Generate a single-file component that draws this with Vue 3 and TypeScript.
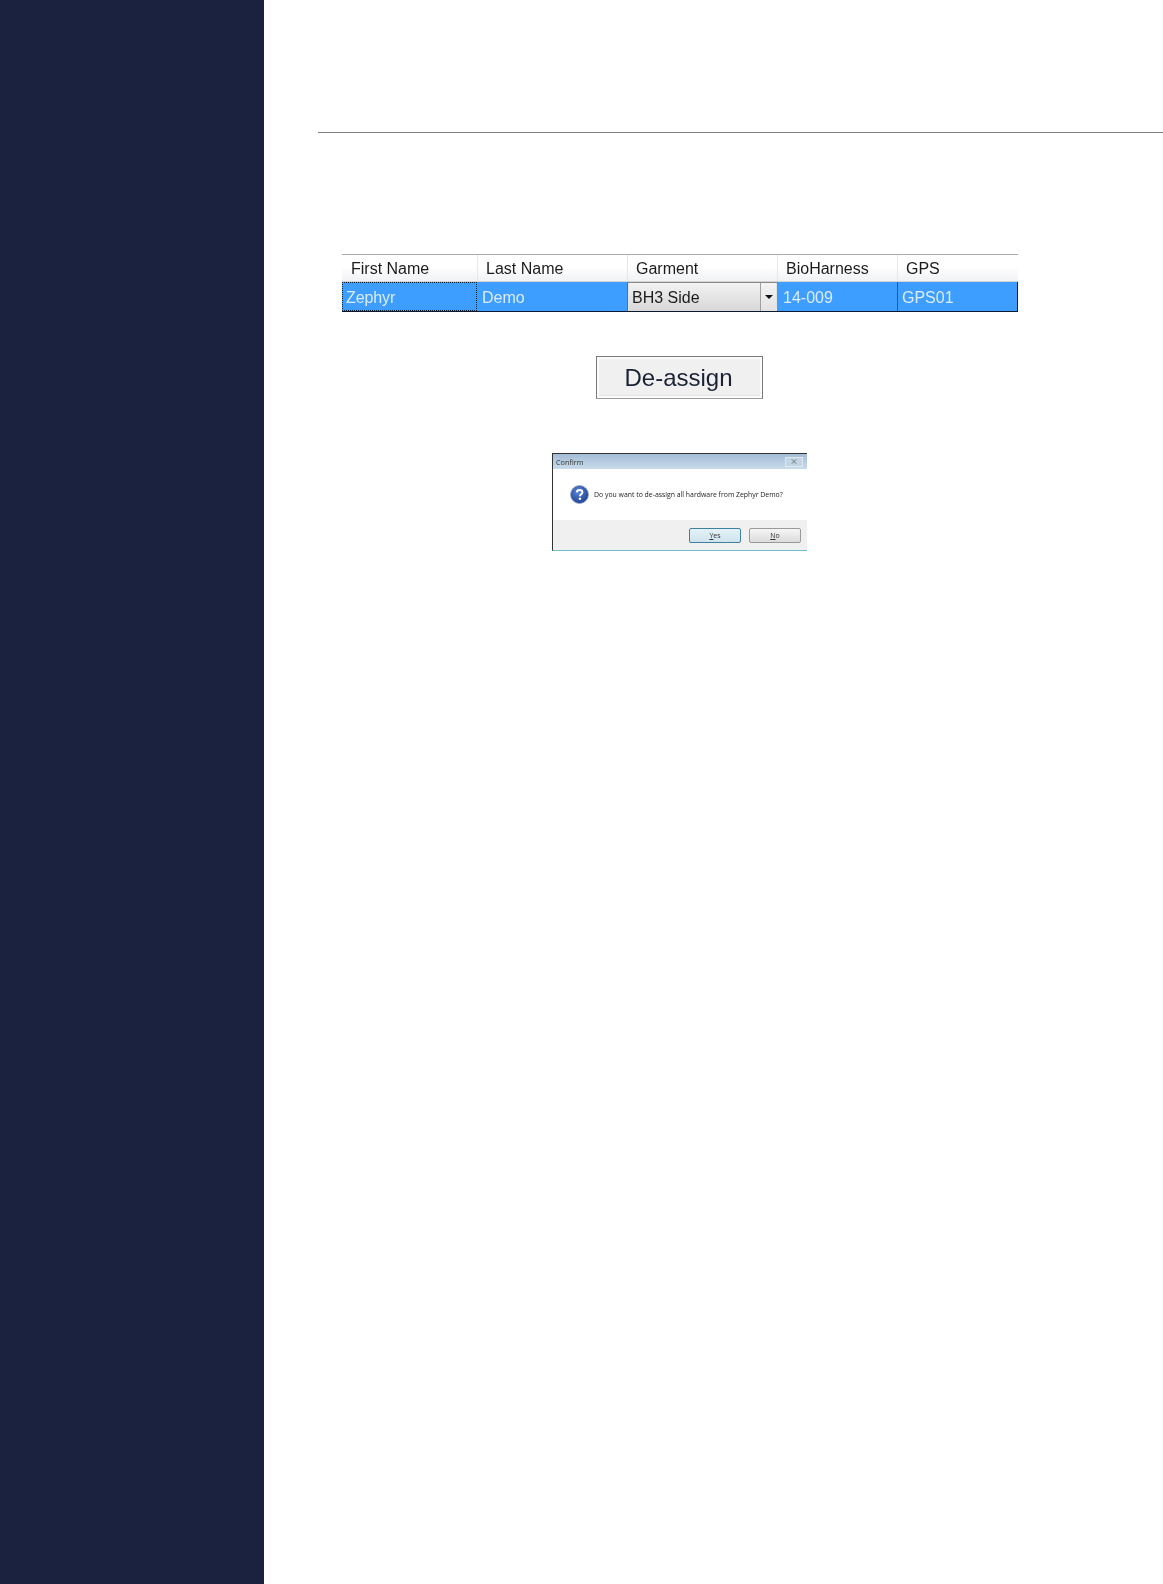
<script setup lang="ts">
const headers = [
  { label: 'First Name', w: 136 },
  { label: 'Last Name', w: 150 },
  { label: 'Garment', w: 150 },
  { label: 'BioHarness', w: 120 },
  { label: 'GPS', w: 120 },
]
</script>

<template>
  <div class="page">
    <aside class="sidebar"></aside>
    <main class="main">
      <div class="rule"></div>
      <section class="grid">
        <div class="head">
          <div v-for="h in headers" :key="h.label" class="hcell" :style="{ width: h.w + 'px' }">{{ h.label }}</div>
        </div>
        <div class="row">
          <div class="cell first">Zephyr</div>
          <div class="cell second">Demo</div>
          <div class="cell combo">
            <div class="combo-value">BH3 Side</div>
            <div class="combo-arrow"><span class="tri"></span></div>
          </div>
          <div class="cell fourth">14-009</div>
          <div class="cell fifth">GPS01</div>
        </div>
      </section>
      <div class="btn-wrap">
        <div class="deassign"><span>De-assign</span></div>
      </div>
      <div class="dlg-wrap">
        <div class="dialog">
          <div class="title">
            <span>Confirm</span>
            <div class="close">
              <svg width="8" height="7" viewBox="0 0 8 7"><path d="M1 0.5L7 6.5M7 0.5L1 6.5" stroke="#5f6f80" stroke-width="1.3" fill="none"/></svg>
            </div>
          </div>
          <div class="body">
            <svg class="q" width="19" height="19" viewBox="0 0 19 19">
              <defs>
                <radialGradient id="qg" cx="0.42" cy="0.35" r="0.7">
                  <stop offset="0" stop-color="#5a86d6"/>
                  <stop offset="1" stop-color="#1d3f8f"/>
                </radialGradient>
              </defs>
              <circle cx="9.5" cy="9.5" r="9" fill="url(#qg)" stroke="#8fa3c7" stroke-width="0.8"/>
              <path d="M6.8 7.4C6.9 5.7 8.1 5 9.6 5C11.2 5 12.4 5.9 12.4 7.3C12.4 9.2 9.9 9.3 9.9 11.2" stroke="#fff" stroke-width="1.9" fill="none"/>
              <circle cx="9.9" cy="13.8" r="1.2" fill="#fff"/>
            </svg>
            <span class="msg">Do you want to de-assign all hardware from Zephyr Demo?</span>
          </div>
          <div class="foot">
            <div class="dbtn yes"><span><u>Y</u>es</span></div>
            <div class="dbtn"><span><u>N</u>o</span></div>
          </div>
        </div>
      </div>
    </main>
  </div>
</template>

<style>
html, body { margin: 0; background: #fff; }
</style>

<style scoped>
.page {
  display: flex;
  width: 1163px;
  height: 1584px;
  overflow: hidden;
  font-family: "Liberation Sans", Arial, sans-serif;
}
.sidebar {
  width: 264px;
  flex: none;
  background: #1a2240;
}
.main {
  flex: 1;
  padding: 132px 0 0 54px;
  display: flex;
  flex-direction: column;
}
.rule {
  height: 1px;
  background: #808080;
}
.grid {
  margin: 121px 0 0 24px;
  width: 676px;
  box-sizing: border-box;
  filter: blur(0.35px);
}
.head {
  display: flex;
  height: 28px;
  border-top: 1px solid #aaa;
  box-sizing: border-box;
  background: linear-gradient(#fff 0, #fff 45%, #f1f2f4 100%);
  border-bottom: 1px solid #d5d5d5;
}
.hcell {
  box-sizing: border-box;
  padding-left: 8px;
  font-size: 16px;
  line-height: 27px;
  color: #1c1c1c;
  border-right: 1px solid #e6e7e9;
}
.hcell:first-child { padding-left: 9px; }
.hcell:last-child { border-right: 0; }
.row {
  display: flex;
  height: 30px;
  box-sizing: border-box;
  background: #3d9eff;
  border-bottom: 1px solid #0b1a2c;
  border-right: 1px solid #0b1a2c;
  color: #dcecff;
  font-size: 16px;
  line-height: 31px;
}
.cell {
  box-sizing: border-box;
  height: 29px;
}
.first {
  width: 135px;
  padding-left: 3px;
  border: 1px dotted #10233c;
  line-height: 29px;
  letter-spacing: -0.1px;
}
.second {
  width: 150px;
  padding-left: 5px;
}
.combo {
  width: 150px;
  display: flex;
  padding: 0 1px;
  color: #1c1c1c;
  background: #e2e2e2;
  border-left: 1px solid #5f6f80;
  border-top: 1px solid #8a8a8a;
}
.combo-value {
  flex: 1;
  padding-left: 3px;
  line-height: 29px;
  background: linear-gradient(#f3f3f3, #e3e3e3 55%, #d8d8d8);
  border-right: 1px solid #a0a0a0;
}
.combo-arrow {
  width: 15px;
  display: flex;
  align-items: center;
  justify-content: center;
  background: linear-gradient(#f4f4f4, #e2e2e2);
}
.tri {
  width: 0;
  height: 0;
  border-left: 4px solid transparent;
  border-right: 4px solid transparent;
  border-top: 4px solid #111;
}
.fourth {
  width: 120px;
  padding-left: 6px;
}
.fifth {
  width: 120px;
  padding-left: 4px;
  border-left: 1px solid #1c5f9f;
}
.btn-wrap {
  display: flex;
  margin: 44px 0 0 278px;
}
.deassign {
  width: 167px;
  height: 43px;
  box-sizing: border-box;
  border: 1px solid #7a7a7a;
  border-bottom-color: #9a9a9a;
  background: #f0f0f0;
  box-shadow: inset 0 0 0 2px #fafafa, inset 0 -3px 0 #e2e2e2;
  display: flex;
  align-items: center;
  justify-content: center;
  font-size: 24px;
  color: #1a2233;
  padding-right: 2px;
  filter: blur(0.35px);
}
.dlg-wrap {
  display: flex;
  margin: 54px 0 0 234px;
}
.dialog {
  width: 255px;
  height: 98px;
  box-sizing: border-box;
  border-top: 1px solid #333;
  border-left: 1px solid #333;
  border-bottom: 1px solid #6fc0cf;
  display: flex;
  flex-direction: column;
  font-family: "Open Sans", sans-serif;
  color: #333;
  filter: blur(0.35px);
}
.title {
  height: 15px;
  flex: none;
  background: linear-gradient(#a4bcd6, #c9dbeb);
  display: flex;
  align-items: center;
  justify-content: space-between;
  padding: 0 4px 0 3px;
  font-size: 7.3px;
}
.close {
  width: 18px;
  height: 10px;
  background: #c3d4e3;
  border: 1px solid #dde7f0;
  box-sizing: border-box;
  display: flex;
  align-items: center;
  justify-content: center;
}
.close svg { width: 6px; height: 5px; }
.body {
  height: 51px;
  flex: none;
  background: #fff;
  display: flex;
  align-items: center;
  padding: 0 0 1px 17px;
  box-sizing: border-box;
  gap: 5px;
}
.q { flex: none; }
.msg {
  font-size: 6.9px;
  white-space: nowrap;
  color: #222;
}
.foot {
  flex: 1;
  background: #f0f0f0;
  display: flex;
  justify-content: flex-end;
  align-items: center;
  gap: 8px;
  padding: 1px 6px 0 0;
}
.dbtn {
  width: 52px;
  height: 15px;
  box-sizing: border-box;
  border: 1px solid #9a9a9a;
  border-radius: 2px;
  background: linear-gradient(#f5f5f5, #dcdcdc);
  display: flex;
  align-items: center;
  justify-content: center;
  font-size: 7px;
  color: #333;
}
.yes {
  border-color: #3f7f9f;
  background: linear-gradient(#e4f2f8, #cfe3ec);
}
</style>
